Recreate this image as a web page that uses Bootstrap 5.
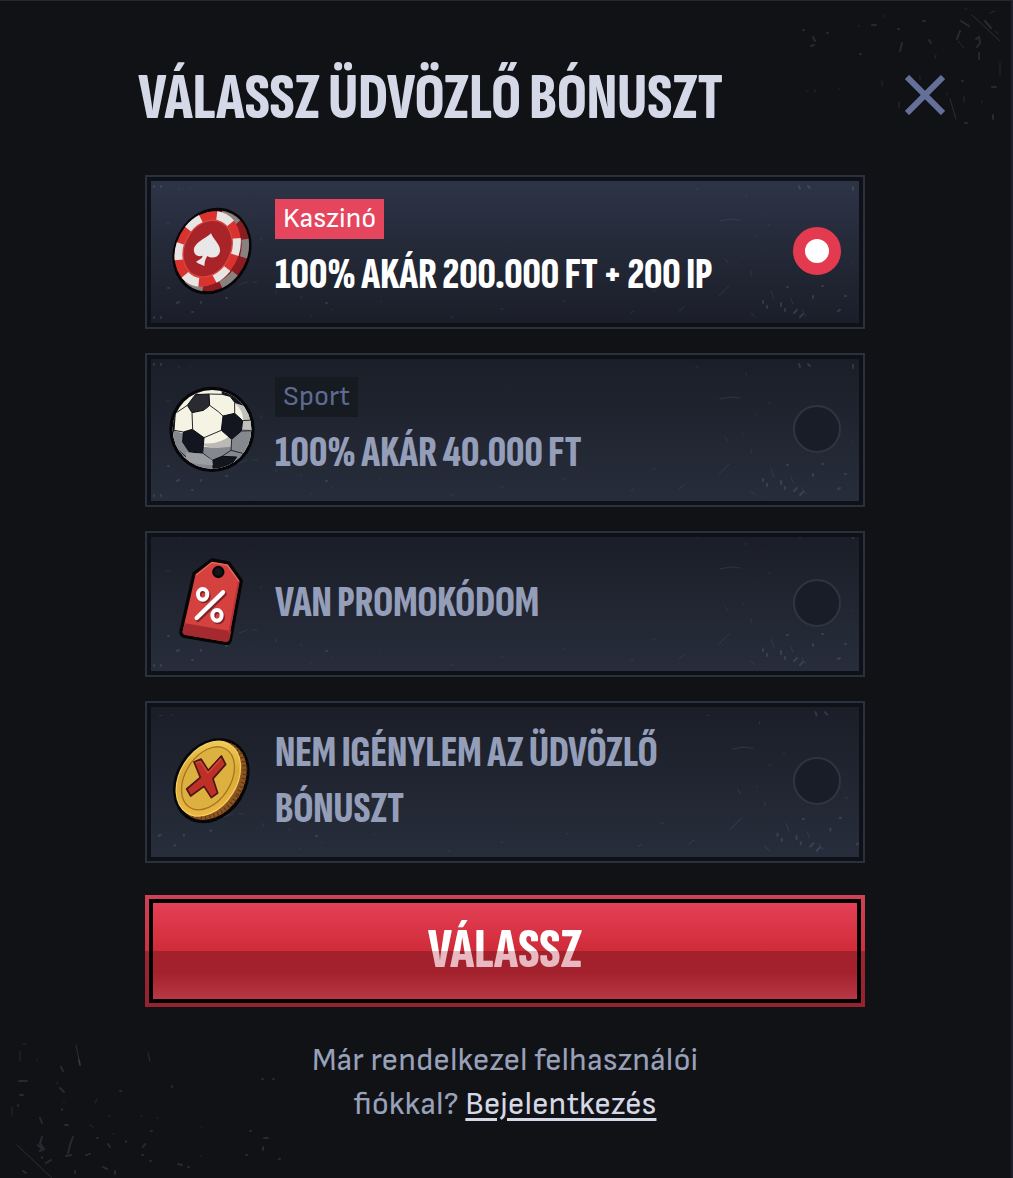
<!DOCTYPE html>
<html lang="hu">
<head>
<meta charset="utf-8">
<meta name="viewport" content="width=device-width, initial-scale=1">
<title>Válassz üdvözlő bónuszt</title>
<link href="https://cdn.jsdelivr.net/npm/bootstrap@5.3.0/dist/css/bootstrap.min.css" rel="stylesheet">
<style>
  :root { --display: "Sofia Sans Extra Condensed", "Roboto Condensed", sans-serif; }
  body { background: #101216; color: #98a0ba; font-family: "Sofia Sans", Roboto, sans-serif; }
  .bonus-modal { min-height: 100vh; padding-right: 1px; border-top: 1px solid #26282d; border-right: 2px solid #1d222e; overflow: hidden; }
  .bonus-head { padding: 62px 65px 40px 138px; }
  .bonus-title { font: 800 66px/72px var(--display); color: #d5d8e6; text-transform: uppercase; }
  .close-x { width: 40px; height: 40px; margin-top: 12px; color: #65709a; line-height: 0; }
  .bonus-body { max-width: 720px; }
  .option { border: 2px solid #2b303d; padding: 4px; background: #0e1118; cursor: pointer; color: #959eb9; }
  .option-face { padding: 18px 18px 20px 12px; background: linear-gradient(#1b1e28, #272d3b); }
  .option.selected { color: #fff; }
  .option.selected .option-face { background: linear-gradient(#2d3446, #1b1e29); }
  .option-icon { width: 96px; height: 96px; }
  .option-name { font: 800 44px/56px var(--display); text-transform: uppercase; }
  .tag-label { font-size: 28px; line-height: 40px; padding: 0 8px; background: #161a21; color: #5f6a92; }
  .selected .tag-label { background: #e5455d; color: #fff; }
  .pick { appearance: none; width: 48px; height: 48px; border: 2px solid #2f3442; border-radius: 50%; background: #191d27; cursor: pointer; }
  .pick:checked { border: 12px solid #e33a50; background: #fff; }
  .grunge { inset: 0; width: 100%; height: 100%; pointer-events: none; }
  .submit { border: 0; padding: 4px; margin-top: 32px; background: linear-gradient(#cd4354, #cf3140 50%, #9d262f 50%, #94232d); }
  .submit-face { border: 4px solid #000; font: 800 56px/96px var(--display); color: #fff; text-transform: uppercase;
    background: linear-gradient(#e44056, #cf2b38 50%, #9d262b 50%, #9d262b 72%, #bb4651); }
  .submit-face::after { content: ""; position: absolute; inset: 50% 0 0; background: rgba(178, 22, 45, .3); }
  .login-note { font-size: 32px; line-height: 44px; max-width: 440px; margin-top: 32px; }
  .login-note a { color: #d5d8e6; text-underline-offset: 4px; text-decoration-thickness: 3px; }
</style>
<script src="https://cdn.jsdelivr.net/npm/bootstrap@5.3.0/dist/js/bootstrap.bundle.min.js"></script>
</head>
<body>
<svg class="d-none" aria-hidden="true">
  <symbol id="scratches" viewBox="0 0 708 142" preserveAspectRatio="xMidYMax slice">
    <g fill="none" stroke="#77839d" stroke-linecap="round">
      <path stroke-width="2" opacity=".25" d="M3 5v1M10 5v1M3 136v1M10 136v1M50 121v1M26 122l2-1M17 107h1M75 117h1M41 131h1M175 122h1M612 120v2M616 125v2M630 122v3M634 128v2M643 132l3-3M649 136l3-3M662 115v2M687 130l2-1M694 115h1M671 105h1M636 106h1M648 5l1 3M657 5l2 2M702 6v3"/>
      <path stroke-width="1" opacity=".18" d="M15 42h4M27 8h2M39 7v1M88 104l8-3M102 101h4M125 110v3M110 57v2M150 115v2M160 134v1M181 128v1M569 40l10-2 10 1M568 115l10-10M545 8h2M600 90v4M592 75h1M604 55h1M617 44h2M676 85l2 2M701 82h1M620 110l3 8M600 132l4 4M528 130l5-4M502 110h2M480 132l3-2M412 120h2M350 128h2M300 136h2M230 120v1M660 65h1M574 78l3 4M640 118l2 5M651 129l4 6M595 14v2"/>
    </g>
  </symbol>
</svg>

<main class="bonus-modal position-relative">
  <svg class="position-absolute grunge" viewBox="0 0 1011 1177" preserveAspectRatio="xMidYMid slice" aria-hidden="true">
    <g fill="none" stroke="#6d7078" stroke-linecap="round">
      <path stroke-width="1" opacity=".3" d="M972 14l28 26M17 1144l36 34M76 1044l4 20M950 98l6 20M148 1052l2 8M899 101v6"/>
      <path stroke-width="2" opacity=".26" d="M976 38l3-2 1 6-3 4M979 52v6M960 30l-3 8M923 20h2M929 39l2 3M813 36l2 4M811 45l3-1M803 29h1M827 32h1M872 24h4M898 28h1M902 42l-2 8M860 53h1M961 20l8 5M985 20l6 7M962 80h1M992 86h4M993 114v4M965 122h2M40 1117l2 5M42 1136l-2 6 4 6-4 2M38 1144l3 3M73 1136l-3 8-2 8M66 1155l5-1M19 1080h8M60 1087l4 4M61 1066l2 4M62 1108v1M65 1124h3M80 1064l-1-5M120 1090h1M151 1130h1M145 1143l-2 3M108 1143l2 3M126 1140v1M142 1154h1M150 1160h1M115 1170v3M103 1166l4 2M75 1170v2M178 1163l4 1M188 1166h1M264 1137h4M263 1146v3M250 1130h1M279 1158h1M273 1078h1M262 1078h1M246 1154h1M46 1162l5-3M20 1094h3M18 1104v1M23 1170l3 2M42 1156v1M97 1137h1M86 1154h1M89 1153h1M172 1085v1"/>
      <path stroke-width="1" opacity=".25" d="M935 57l1-3M947 92v2M1000 62v12M990 12l5-2M965 8h2M883 15h1M858 25h2M840 88h-1M807 90h1M815 89v2M882 80v5M920 75v3M964 95v6M958 40l6 7M982 100v2M995 30l3 3M20 1050v10M23 1043h3M37 1059v1M56 1082h2M97 1098l-2 4M64 1100v1M108 1115h2M90 1124l3 2M200 1155h1M201 1126h1M141 1115h1M157 1117h1M113 1133h1M12 1106v8"/>
    </g>
  </svg>

  <header class="bonus-head position-relative d-flex align-items-start justify-content-between">
    <h1 class="bonus-title m-0">Válassz üdvözlő bónuszt</h1>
    <button type="button" class="close-x btn border-0 p-0 flex-shrink-0" aria-label="Bezárás">
      <svg width="40" height="40" viewBox="0 0 40 40" fill="none" stroke="currentColor" stroke-width="6" aria-hidden="true"><path d="M2 2l36 36M38 2L2 38"/></svg>
    </button>
  </header>

  <form class="bonus-body position-relative mx-auto">
    <div class="d-grid gap-4">
      <label class="option selected" for="casino">
        <span class="option-face position-relative d-flex align-items-center gap-3">
          <svg class="position-absolute grunge" aria-hidden="true"><use href="#scratches"/></svg>
          <svg class="option-icon flex-shrink-0" viewBox="69 99 288 288" aria-hidden="true">
            <ellipse cx="216" cy="243" rx="114" ry="134" transform="rotate(28 216 243)" fill="#060608"/>
            <ellipse cx="219" cy="243" rx="103" ry="125" transform="rotate(28 219 243)" fill="#8a1c22"/>
            <ellipse cx="217" cy="243" rx="94" ry="115" transform="rotate(28 217 243)" fill="none" stroke="#86827f" stroke-width="22" pathLength="12" stroke-dasharray="1 1" stroke-dashoffset="-.5"/>
            <ellipse cx="203" cy="237" rx="93" ry="118" transform="rotate(28 203 237)" fill="#da332f"/>
            <ellipse cx="203" cy="237" rx="80" ry="105" transform="rotate(28 203 237)" fill="none" stroke="#e9e5e3" stroke-width="27" pathLength="12" stroke-dasharray="1 1" stroke-dashoffset="-.5"/>
            <ellipse cx="203" cy="236" rx="69" ry="89" transform="rotate(28 203 236)" fill="#a92429" stroke="#d94742" stroke-width="4"/>
            <path d="M213 190C202 202 174 212 163 232C157 250 170 263 188 257C186 266 180 268 168 275L174 280L193 288C194 277 195 268 202 258C218 268 237 262 240 244C242 224 222 212 213 190Z" fill="#e9e7e8"/>
          </svg>
          <span class="flex-grow-1">
            <span class="tag-label d-inline-block align-top mb-2">Kaszinó</span>
            <span class="option-name d-block">100% akár 200.000 Ft + 200 IP</span>
          </span>
          <input class="pick flex-shrink-0 m-0 position-relative" type="radio" name="bonus" id="casino" checked>
        </span>
      </label>

      <label class="option" for="sport">
        <span class="option-face position-relative d-flex align-items-center gap-3">
          <svg class="position-absolute grunge" aria-hidden="true"><use href="#scratches"/></svg>
          <svg class="option-icon flex-shrink-0" viewBox="69 93 288 288" aria-hidden="true">
            <defs><clipPath id="ball"><circle cx="216" cy="238" r="118"/></clipPath></defs>
            <circle cx="216" cy="238" r="128" fill="#060709"/>
            <g clip-path="url(#ball)">
              <path d="M90 110H340V370H90Z" fill="#f5f3e4"/>
              <path d="M90 238L135 252L190 290Q250 300 275 268Q305 247 320 195L345 200V370H90Z" fill="#85888f"/>
              <path d="M192 280Q235 285 273 256L274 290L232 294Q205 294 190 286Z" fill="#bab9b5"/>
              <path d="M285 160Q320 190 305 238L338 240L336 188L300 145Z" fill="#c2c0ba"/>
              <g fill="#14161f" stroke="#0b0d13" stroke-width="3" stroke-linejoin="round">
                <path d="M142 166L166 134L207 132L209 166L190 181L156 188Z" fill="#292b31"/>
                <path d="M246 116L290 128L318 168L284 157L270 139L247 133Z"/>
                <path d="M249 198L284 190L308 212L304 243L275 268L244 241Z"/>
                <path d="M130 246L157 238L192 263L188 309L148 306L128 276Z"/>
                <path d="M217 331L246 319L290 321L262 360L220 360Z"/>
                <path d="M90 200L106 188L102 240L96 252Z"/>
              </g>
              <g fill="none" stroke="#25272d" stroke-width="3">
                <path d="M166 134Q185 117 210 119M207 132L247 133M190 181L209 166L235 185L249 198M284 157L284 190M156 188L158 237M244 241L192 263M275 268L273 301L246 319M188 309L217 331M308 212L336 210M304 243L336 242M130 246L98 240M148 306L138 320M138 320L112 298M142 166L106 190M273 301L308 310"/>
              </g>
              <path d="M138 306L188 312L217 331L219 346Q160 345 138 330Z" fill="#9b9da2"/>
            </g>
          </svg>
          <span class="flex-grow-1">
            <span class="tag-label d-inline-block align-top mb-2">Sport</span>
            <span class="option-name d-block">100% akár 40.000 Ft</span>
          </span>
          <input class="pick flex-shrink-0 m-0 position-relative" type="radio" name="bonus" id="sport">
        </span>
      </label>

      <label class="option" for="promo">
        <span class="option-face position-relative d-flex align-items-center gap-3">
          <svg class="position-absolute grunge" aria-hidden="true"><use href="#scratches"/></svg>
          <svg class="option-icon flex-shrink-0" viewBox="69 90 288 288" aria-hidden="true">
            <path d="M162 146L215 105L266 114L304 167L271 345Q268 357 256 355L134 334Q121 331 123 318Z" fill="#d4413f" stroke="#060607" stroke-width="10" stroke-linejoin="round"/>
            <path d="M135 295L274 319L268 345Q266 351 256 350L136 330Q127 328 128 319Z" fill="#a52a30"/>
            <path d="M168 150L216 112L262 120L297 169" fill="none" stroke="#ea6a5d" stroke-width="4"/>
            <path d="M296 171L267 325" stroke="#b43238" stroke-width="5"/>
            <circle cx="235" cy="141" r="15" fill="#14151b" stroke="#060607" stroke-width="7"/>
            <g fill="none" stroke-linecap="round">
              <g stroke="#7f2229" transform="translate(4 5)"><path d="M170 279L249 202" stroke-width="14"/><ellipse cx="188" cy="208" rx="14" ry="16" stroke-width="12"/><ellipse cx="231" cy="271" rx="14" ry="16" stroke-width="12"/></g>
              <g stroke="#fff"><path d="M170 279L249 202" stroke-width="13"/><ellipse cx="188" cy="208" rx="14" ry="16" stroke-width="12"/><ellipse cx="231" cy="271" rx="14" ry="16" stroke-width="12"/></g>
            </g>
          </svg>
          <span class="option-name flex-grow-1">Van promokódom</span>
          <input class="pick flex-shrink-0 m-0 position-relative" type="radio" name="bonus" id="promo">
        </span>
      </label>

      <label class="option" for="none">
        <span class="option-face position-relative d-flex align-items-center gap-3">
          <svg class="position-absolute grunge" aria-hidden="true"><use href="#scratches"/></svg>
          <svg class="option-icon flex-shrink-0" viewBox="69 114 288 288" aria-hidden="true">
            <defs><linearGradient id="gold" x1="0" y1="0" x2=".4" y2="1"><stop stop-color="#f5d964"/><stop offset=".5" stop-color="#d9aa35"/><stop offset="1" stop-color="#e9b442"/></linearGradient></defs>
            <ellipse cx="214" cy="257" rx="106" ry="135" transform="rotate(32 214 257)" fill="#060607"/>
            <ellipse cx="216" cy="257" rx="94" ry="126" transform="rotate(32 216 257)" fill="#8d5520"/>
            <ellipse cx="217" cy="257" rx="88" ry="120" transform="rotate(32 217 257)" fill="none" stroke="#5d3415" stroke-width="14" stroke-dasharray="3 10"/>
            <ellipse cx="205" cy="251" rx="85" ry="121" transform="rotate(32 205 251)" fill="url(#gold)" stroke="#f2cf62" stroke-width="4"/>
            <ellipse cx="204" cy="250" rx="68" ry="103" transform="rotate(32 204 250)" fill="#dcb13f" stroke="#a97420" stroke-width="4"/>
            <path d="M162 201L183 192L205 226L244 183L257 208L219 251L233 294L214 308L192 274L152 303L140 282L181 247Z" fill="#bd3028" stroke="#4c1713" stroke-width="5" stroke-linejoin="round"/>
            <path d="M168 204L181 199L204 234L243 191" fill="none" stroke="#d34a3a" stroke-width="4"/>
          </svg>
          <span class="option-name flex-grow-1">Nem igénylem az üdvözlő bónuszt</span>
          <input class="pick flex-shrink-0 m-0 position-relative" type="radio" name="bonus" id="none">
        </span>
      </label>
    </div>

    <button type="submit" class="submit d-block w-100">
      <span class="submit-face position-relative d-block">Válassz</span>
    </button>
    <p class="login-note text-center mx-auto mb-0 pb-5">Már rendelkezel felhasználói fiókkal? <a href="#login">Bejelentkezés</a></p>
  </form>
</main>
</body>
</html>
